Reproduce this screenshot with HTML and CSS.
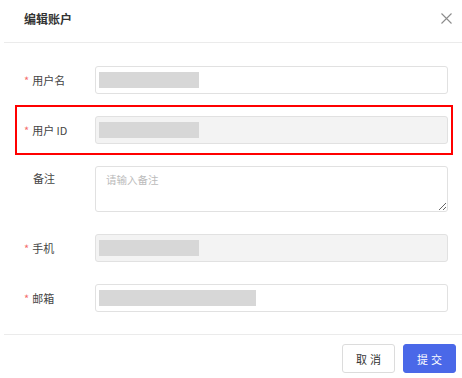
FILE: index.html
```html
<!DOCTYPE html>
<html lang="zh-CN">
<head>
	<meta charset="UTF-8">
	<title>编辑账户</title>
	<link rel="stylesheet" href="styles.css">
</head>
<body>
	<div class="dialog">
		<div class="dialog-head">
			<span class="dialog-title">编辑账户</span>
			<a class="dialog-close" href="#">
				<svg width="11" height="11" viewBox="0 0 11 11"><path d="M0.5 0.5L10.5 10.5M10.5 0.5L0.5 10.5" stroke="#8c8c8c" stroke-width="1.1" fill="none"/></svg>
			</a>
		</div>

		<div class="form">
			<div class="row">
				<label class="label"><i>*</i>用户名</label>
				<div class="input"><span class="mask"></span></div>
			</div>
			<div class="row row-mark">
				<label class="label"><i>*</i>用户 ID</label>
				<div class="input disabled"><span class="mask"></span></div>
			</div>
			<div class="row">
				<label class="label label-plain">备注</label>
				<textarea class="textarea" placeholder="请输入备注"></textarea>
			</div>
			<div class="row">
				<label class="label"><i>*</i>手机</label>
				<div class="input disabled"><span class="mask"></span></div>
			</div>
			<div class="row">
				<label class="label"><i>*</i>邮箱</label>
				<div class="input"><span class="mask mask-long"></span></div>
			</div>
		</div>

		<div class="dialog-foot">
			<button class="btn">取消</button>
			<button class="btn btn-primary">提交</button>
		</div>
	</div>
</body>
</html>
```

FILE: styles.css
```css
*{
	margin: 0;
	padding: 0;
	box-sizing: border-box;
}
body{
	background: #fff;
	font-family: "Noto Sans CJK SC", "Noto Sans", sans-serif;
	color: #333;
}
.dialog{
	width: 462px;
	height: 378px;
}
.dialog-head{
	height: 43px;
	margin-left: 4px;
	padding: 10px 10px 0 20px;
	display: flex;
	justify-content: space-between;
	align-items: flex-start;
	border-bottom: 1px solid #ebebeb;
}
.dialog-title{
	font-size: 12px;
	line-height: 17px;
	font-weight: 700;
	color: #333;
}
.dialog-close{
	display: block;
	width: 11px;
	height: 11px;
	margin-top: 3px;
}
.dialog-close svg{
	display: block;
}
.form{
	padding: 23px 14px 0 24px;
	display: flex;
	flex-direction: column;
	gap: 22px;
}
.row{
	display: flex;
	align-items: center;
	position: relative;
}
/* highlight frame */
.row-mark::after{
	content: "";
	position: absolute;
	top: -11px;
	bottom: -11px;
	left: -9px;
	right: -5px;
	border: 2px solid #f00;
}
.label{
	width: 71px;
	flex: none;
	font-size: 11px;
	color: #444;
	align-self: center;
}
.label i{
	font-style: normal;
	color: #f56c6c;
	margin-right: 3px;
	font-size: 11px;
}
.label-plain{
	padding-left: 9px;
	align-self: flex-start;
	margin-top: 4px;
}
.input{
	flex: 1;
	height: 28px;
	border: 1px solid #e1e1e1;
	border-radius: 3px;
	background: #fff;
	padding: 5px 3px;
}
.input.disabled{
	background: #f3f3f3;
}
.mask{
	display: block;
	width: 100px;
	height: 16px;
	background: #d7d7d7;
}
.mask-long{
	width: 157px;
}
.textarea{
	flex: 1;
	height: 46px;
	border: 1px solid #e1e1e1;
	border-radius: 3px;
	padding: 5px 10px;
	font-family: inherit;
	font-size: 10.5px;
	line-height: 16px;
	color: #333;
	outline: none;
}
.textarea::placeholder{
	color: #bbb;
}
.dialog-foot{
	margin: 22px 0 0 4px;
	padding: 9px 6px 0 0;
	border-top: 1px solid #ebebeb;
	display: flex;
	justify-content: flex-end;
	gap: 8px;
}
.btn{
	width: 53px;
	height: 29px;
	border: 1px solid #dcdcdc;
	border-radius: 3px;
	background: #fff;
	font-family: inherit;
	font-size: 11px;
	letter-spacing: 3px;
	padding-left: 3px;
	color: #333;
}
.btn-primary{
	background: #4a68e8;
	border-color: #4a68e8;
	color: #fff;
}
```
